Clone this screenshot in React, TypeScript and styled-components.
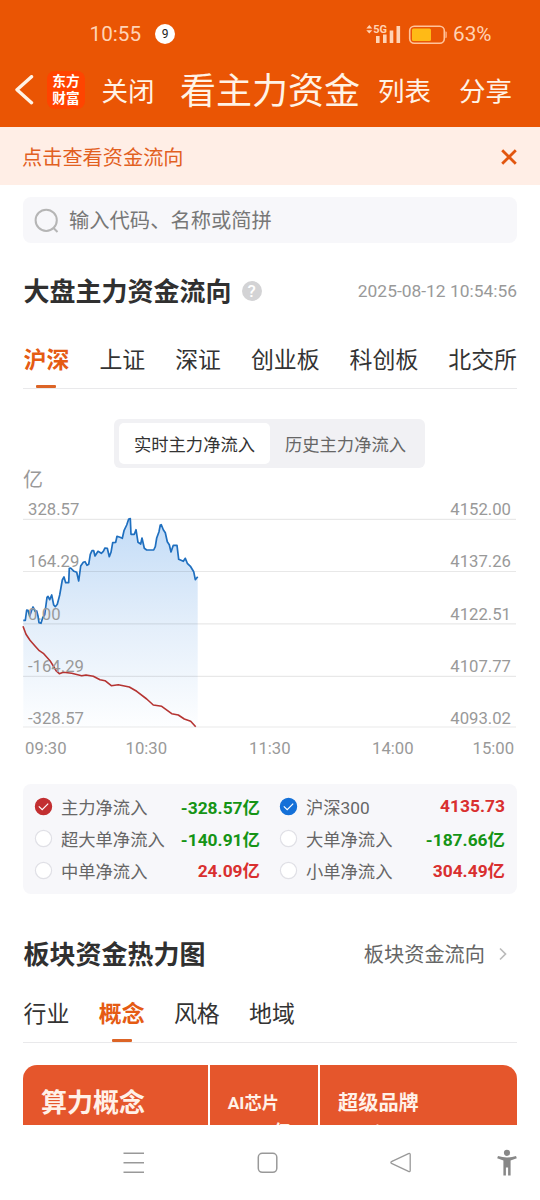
import React from "react";
import styled, { createGlobalStyle } from "styled-components";

const GlobalStyle = createGlobalStyle`
  * { box-sizing: border-box; }
  body {
    margin: 0;
    background: #fff;
    font-family: Roboto, "Noto Sans CJK SC", sans-serif;
    color: #333;
  }
`;

const Screen = styled.div`
  width: 540px;
  height: 1200px;
  overflow: hidden;
  display: flex;
  flex-direction: column;
  background: #fff;
  white-space: nowrap;
`;

const Header = styled.header`
  height: 127px;
  flex: none;
  background: #ea5504;
  color: #fff3e6;
`;

const StatusBar = styled.div`
  height: 68px;
  padding: 0 48.5px 0 89.5px;
  display: flex;
  align-items: center;
  font-size: 20.7px;
  color: #ffd3b5;
`;

const NoticeCount = styled.span`
  width: 20px;
  height: 20px;
  margin-left: 14px;
  border-radius: 50%;
  background: #fff;
  color: #222;
  font-size: 12px;
  line-height: 20px;
  text-align: center;
`;

const StatusIcons = styled.svg`
  margin-left: auto;
  margin-right: 6px;
`;

const NavBar = styled.nav`
  height: 46px;
  display: flex;
  align-items: center;
  padding-left: 13px;
`;

const Logo = styled.div`
  width: 38px;
  height: 38px;
  margin: -2px 0 0 13px;
  border-radius: 8px;
  background: #ff4400;
  color: #fff;
  font-family: "Noto Sans CJK SC", sans-serif;
  font-size: 13.7px;
  font-weight: 700;
  line-height: 16.5px;
  text-align: center;
  padding-top: 1px;
`;

const NavText = styled.span<{ $gap: number; $large?: boolean }>`
  margin: ${(p) => (p.$large ? 2 : 1)}px 0 0 ${(p) => p.$gap}px;
  font-size: ${(p) => (p.$large ? 36 : 26.5)}px;
  line-height: 46px;
  font-weight: 400;
`;

const Notice = styled.div`
  height: 58px;
  flex: none;
  padding: 1px 23px 0 22px;
  display: flex;
  align-items: center;
  justify-content: space-between;
  background: #ffeee6;
  color: #e2601f;
  font-size: 20.2px;
`;

const Main = styled.main`
  height: 940px;
  flex: none;
  padding: 12px 23px 0;
  overflow: hidden;
`;

const SearchBox = styled.div`
  height: 46px;
  padding-left: 11px;
  display: flex;
  align-items: center;
  gap: 10px;
  border-radius: 8px;
  background: #f7f7fa;
  color: #777;
  font-size: 20.3px;

  span {
    margin-top: -2px;
  }
`;

const TitleRow = styled.div<{ $top: number }>`
  height: 40px;
  margin-top: ${(p) => p.$top}px;
  display: flex;
  align-items: center;
`;

const Title = styled.h2`
  margin: 0 0 0 0.6px;
  font-size: 26px;
  font-weight: 700;
  line-height: 40px;
  color: #303030;
`;

const HelpBadge = styled.span`
  width: 20px;
  height: 20px;
  margin: -3px 0 0 10px;
  border-radius: 50%;
  background: #d3d3d5;
  color: #fff;
  font-size: 17px;
  font-weight: 500;
  line-height: 20px;
  text-align: center;
`;

const Timestamp = styled.time`
  margin: -2px 0 0 auto;
  font-size: 17.4px;
  color: #999;
`;

const MoreLink = styled.a`
  margin: -3px 0 0 auto;
  padding-right: 9px;
  display: flex;
  align-items: center;
  gap: 13px;
  font-size: 20.2px;
  color: #666;
`;

const Tabs = styled.div<{ $top: number; $spread?: boolean }>`
  height: 51px;
  margin-top: ${(p) => p.$top}px;
  padding-left: 0.6px;
  display: flex;
  justify-content: ${(p) => (p.$spread ? "space-between" : "flex-start")};
  gap: ${(p) => (p.$spread ? 0 : 29.4)}px;
  border-bottom: 1.5px solid #e9e9eb;
`;

const Tab = styled.span<{ $active?: boolean }>`
  display: flex;
  flex-direction: column;
  align-items: center;
  font-size: 22.9px;
  line-height: 45px;
  font-weight: ${(p) => (p.$active ? 700 : 400)};
  color: ${(p) => (p.$active ? "#e55b13" : "#333")};

  &::after {
    content: "";
    width: 20px;
    height: 3px;
    margin-top: 2px;
    border-radius: 1px;
    background: ${(p) => (p.$active ? "#dc6426" : "transparent")};
  }
`;

const Segmented = styled.div`
  width: 311px;
  height: 49px;
  margin: 30px 0 0 91px;
  padding: 4px 4px 4px 5px;
  display: flex;
  border-radius: 6px;
  background: #f1f1f4;
`;

const Segment = styled.span<{ $active?: boolean }>`
  width: 151px;
  border-radius: 5px;
  background: ${(p) => (p.$active ? "#fff" : "transparent")};
  color: ${(p) => (p.$active ? "#333" : "#666")};
  font-size: 17.3px;
  line-height: 44px;
  height: 41px;
  text-align: center;
`;

const Unit = styled.div`
  height: 32px;
  padding-top: 1px;
  font-size: 20px;
  line-height: 22px;
  color: #999;
`;

const Chart = styled.svg`
  display: block;
  overflow: visible;
  text {
    font-family: Roboto, sans-serif;
    font-size: 16.7px;
    fill: #999;
  }
`;

const Legend = styled.div`
  height: 110px;
  margin-top: 14px;
  padding: 7px 12px 7px 11px;
  display: grid;
  grid-template-columns: 226px 226px;
  grid-template-rows: repeat(3, 31.7px);
  column-gap: 19px;
  border-radius: 8px;
  background: #f7f7fa;
`;

const LegendItem = styled.div`
  display: flex;
  align-items: center;
  font-size: 17.3px;
  color: #666;
`;

const Check = styled.svg`
  margin: 0 8px 0 0;
`;

const Amount = styled.b<{ $down?: boolean }>`
  margin: -1px 0 0 auto;
  font-size: 17.4px;
  color: ${(p) => (p.$down ? "#159415" : "#d92f2f")};
`;

const HeatMap = styled.div`
  height: 200px;
  margin-top: 21.5px;
  display: grid;
  grid-template-columns: 185px 107.5px 1fr;
  gap: 2.25px;
  overflow: hidden;
  border-radius: 14px;
`;

const HeatTile = styled.div<{ $size: number; $left: number; $top: number }>`
  padding: ${(p) => p.$top}px 0 0 ${(p) => p.$left}px;
  background: #e5562c;
  color: #fff1e8;
  font-size: ${(p) => p.$size}px;
  font-weight: 700;
  line-height: 30px;
`;

const TileAmount = styled.div<{ $left: number; $top: number }>`
  margin: ${(p) => p.$top}px 0 0 ${(p) => p.$left}px;
  font-size: 17.3px;
  line-height: 20px;
`;

const SystemNav = styled.footer`
  height: 75px;
  flex: none;
  background: #fff;
`;

const blue =
  "0.3,120.3 2.3,120.3 3.7,110 5,110.3 6.7,116 9,109.3 10,107 12.3,111.5 13.7,111 15,116 16,122.7 18,123.3 19.7,117.7 21.7,114.7 24,97.3 25,96.3 26.7,99.7 28.7,95 30.7,105 32.3,106.7 34.3,104.3 36.7,95 39.3,80 41,77 42.7,82.7 45.7,82.7 46.3,68.3 47.7,68 51,71.3 53.7,72.3 55.7,81 57.7,66 60.3,62.3 62,61.7 64,65.3 65.7,64.3 67.3,54.3 69,50.7 70.7,50.7 72,56 75,51.3 78.3,53.3 80.3,51.3 82,48 84.3,48.3 86.3,56.7 88,52.3 89.7,42.7 92.7,42.3 94,36.3 97,37.3 99.3,38.3 101,30.7 103.7,25 105.7,19 107.3,18.7 108,34.3 111.3,34.3 113,29.7 115,42.3 117.7,44 119,38 121.3,48.3 123.7,50 130.7,50 132.3,46.7 133.7,38 136,31.7 137.3,25 138.3,24.7 140.3,29.7 142.3,32.7 144.3,41.7 146.3,44.7 148,52 150.3,45.3 154,45.3 155.7,59.3 160.3,61.3 162.3,58.3 164.3,63.3 167.7,66.7 170.7,71.7 172.3,79.7 174.7,76.7";
const red =
  "0,126.3 3,134.3 7,140.3 12,146 16.3,150.7 20.3,153.3 27,160.7 30.3,166 33.3,171 36.3,173.7 40.3,172.3 48.7,173.3 58.7,175.7 63,175 70.3,176.3 77,179.7 82,180.7 88.3,185.7 95.3,184.7 106.3,187 113.7,191.3 123.7,199 130.3,205 138.7,206.3 148.7,213.7 155.3,215 161.3,219 167.7,221.3 172.7,226.7";

const levels = [
  { y: 19.3, left: "328.57", right: "4152.00" },
  { y: 71.5, left: "164.29", right: "4137.26" },
  { y: 123.8, left: "0.00", right: "4122.51" },
  { y: 176.3, left: "-164.29", right: "4107.77" },
  { y: 227, left: "-328.57", right: "4093.02" },
];

const times = [
  { x: 2, label: "09:30" },
  { x: 102.5, label: "10:30" },
  { x: 226, label: "11:30" },
  { x: 349, label: "14:00" },
  { x: 449.5, label: "15:00" },
];

const legend = [
  { name: "主力净流入", value: "-328.57亿", down: true, fill: "#c22f31" },
  { name: "沪深300", value: "4135.73", fill: "#1470d8" },
  { name: "超大单净流入", value: "-140.91亿", down: true },
  { name: "大单净流入", value: "-187.66亿", down: true },
  { name: "中单净流入", value: "24.09亿" },
  { name: "小单净流入", value: "304.49亿" },
];

function FlowChart() {
  return (
    <Chart width="494" height="270" viewBox="0 0 494 270">
      <defs>
        <linearGradient id="area" x1="0" y1="0" x2="0" y2="1">
          <stop offset="0" stopColor="#c3dcf7" />
          <stop offset="0.5" stopColor="#e3eefa" />
          <stop offset="1" stopColor="#fdfeff" />
        </linearGradient>
      </defs>
      <polygon points={`0.3,227 ${blue} 174.7,227`} fill="url(#area)" />
      {levels.map((l) => (
        <line key={l.y} x1="0" x2="493" y1={l.y} y2={l.y} stroke="#000" strokeOpacity="0.09" strokeWidth="1.2" />
      ))}
      <polyline points={blue} fill="none" stroke="#1f6fbf" strokeWidth="1.7" strokeLinejoin="round" />
      <polyline points={red} fill="none" stroke="#b53432" strokeWidth="1.6" strokeLinejoin="round" />
      {levels.map((l, i) => (
        <React.Fragment key={l.right}>
          <text x={5} y={15 + i * 52.3}>{l.left}</text>
          <text x={488} y={15 + i * 52.3} textAnchor="end">{l.right}</text>
        </React.Fragment>
      ))}
      {times.map((t) => (
        <text key={t.label} x={t.x} y={254}>{t.label}</text>
      ))}
    </Chart>
  );
}

export default function App() {
  return (
    <Screen>
      <GlobalStyle />
      <Header>
        <StatusBar>
          <span>10:55</span>
          <NoticeCount>9</NoticeCount>
          <StatusIcons width="82" height="24" viewBox="365 22 82 24">
            <path d="M366.3 28.6 369.3 25l3 3.6zM366.3 30.2h6l-3 3.4z" fill="#ffd3b5" />
            <text x="373.2" y="33.4" fontFamily="Roboto" fontSize="11" fontWeight="700" fill="#ffd3b5">5G</text>
            <path d="M376 36h3.6v7H376zM383 34.5h3.6V43H383zM389.7 30.5h3.6V43h-3.6zM396.5 26h3.6v17h-3.6z" fill="#ffd3b5" />
            <rect x="409.7" y="26.2" width="34.6" height="17" rx="4.5" fill="none" stroke="#ffc39b" strokeWidth="1.6" />
            <rect x="412" y="28.5" width="19" height="12.4" rx="1.5" fill="#ffba16" />
            <path d="M445.3 31.5h.6q1 0 1 1v4.5q0 1-1 1h-.6z" fill="#ffa878" />
          </StatusIcons>
          <span>63%</span>
        </StatusBar>
        <NavBar>
          <svg width="21" height="32" viewBox="0 0 21 32">
            <path d="M18.5 1.7 4 14.7l14.5 13" fill="none" stroke="#fff3e6" strokeWidth="3.4" strokeLinejoin="round" strokeLinecap="round" />
          </svg>
          <Logo>东方<br />财富</Logo>
          <NavText $gap={16.5}>关闭</NavText>
          <NavText $gap={25.5} $large>看主力资金</NavText>
          <NavText $gap={18}>列表</NavText>
          <NavText $gap={28}>分享</NavText>
        </NavBar>
      </Header>
      <Notice>
        <span>点击查看资金流向</span>
        <svg width="16" height="16" viewBox="0 0 16 16">
          <path d="M1.2 1.2l13.6 13.6M14.8 1.2L1.2 14.8" stroke="#e2560f" strokeWidth="2.8" />
        </svg>
      </Notice>
      <Main>
        <SearchBox>
          <svg width="25" height="25" viewBox="0 0 25 25" fill="none" stroke="#b5b5b5" strokeWidth="2">
            <circle cx="12.2" cy="12.3" r="10.6" />
            <path d="M19.5 20l4 4" />
          </svg>
          <span>输入代码、名称或简拼</span>
        </SearchBox>
        <TitleRow $top={29}>
          <Title>大盘主力资金流向</Title>
          <HelpBadge>?</HelpBadge>
          <Timestamp>2025-08-12 10:54:56</Timestamp>
        </TitleRow>
        <Tabs $top={26} $spread>
          <Tab $active>沪深</Tab>
          <Tab>上证</Tab>
          <Tab>深证</Tab>
          <Tab>创业板</Tab>
          <Tab>科创板</Tab>
          <Tab>北交所</Tab>
        </Tabs>
        <Segmented>
          <Segment $active>实时主力净流入</Segment>
          <Segment>历史主力净流入</Segment>
        </Segmented>
        <Unit>亿</Unit>
        <FlowChart />
        <Legend>
          {legend.map((item) => (
            <LegendItem key={item.name}>
              <Check width="19" height="19" viewBox="0 0 19 19">
                <circle cx="9.5" cy="9.5" r="8.1" fill={item.fill || "#fff"} stroke={item.fill || "#e0e0e6"} strokeWidth="1.2" />
                {item.fill && <path d="M4.8 9.4l3.4 3.3 6-6" fill="none" stroke="#fff" strokeWidth="1.2" />}
              </Check>
              <span>{item.name}</span>
              <Amount $down={item.down}>{item.value}</Amount>
            </LegendItem>
          ))}
        </Legend>
        <TitleRow $top={41}>
          <Title>板块资金热力图</Title>
          <MoreLink>
            板块资金流向
            <svg width="10" height="14" viewBox="0 0 10 14">
              <path d="M2 1.5l5.5 5.5L2 12.5" fill="none" stroke="#bbb" strokeWidth="1.7" />
            </svg>
          </MoreLink>
        </TitleRow>
        <Tabs $top={17}>
          <Tab>行业</Tab>
          <Tab $active>概念</Tab>
          <Tab>风格</Tab>
          <Tab>地域</Tab>
        </Tabs>
        <HeatMap>
          <HeatTile $size={26} $left={18} $top={23}>算力概念</HeatTile>
          <HeatTile $size={17.3} $left={17.5} $top={23}>
            AI芯片
            <TileAmount $left={1} $top={3.5}>40.55亿</TileAmount>
          </HeatTile>
          <HeatTile $size={20.2} $left={18} $top={23}>
            超级品牌
            <TileAmount $left={0} $top={5.5}>35.1亿</TileAmount>
          </HeatTile>
        </HeatMap>
      </Main>
      <SystemNav>
        <svg width="540" height="75" viewBox="0 1125 540 75" fill="none" stroke="#999" strokeWidth="1.5">
          <path d="M123.5 1153.3h20.5M123.5 1162.7h20.5M123.5 1172.2h20.5" />
          <rect x="258.3" y="1153.3" width="18.5" height="19" rx="4" />
          <path d="M392 1161.3 408.5 1153.6q1.7-.7 1.7 1v15.8q0 1.7-1.7 1L392 1163.6q-2.3-1.1 0-2.3z" strokeWidth="1.3" />
          <g fill="#888" stroke="none">
            <circle cx="507" cy="1152.8" r="3.1" />
            <path d="M498 1156.1q9 2.6 18 0l.8 2.2-6.2 2.1V1175.5h-2.5v-8h-2.2v8h-2.5V1160.4l-6.2-2.1z" />
          </g>
        </svg>
      </SystemNav>
    </Screen>
  );
}
